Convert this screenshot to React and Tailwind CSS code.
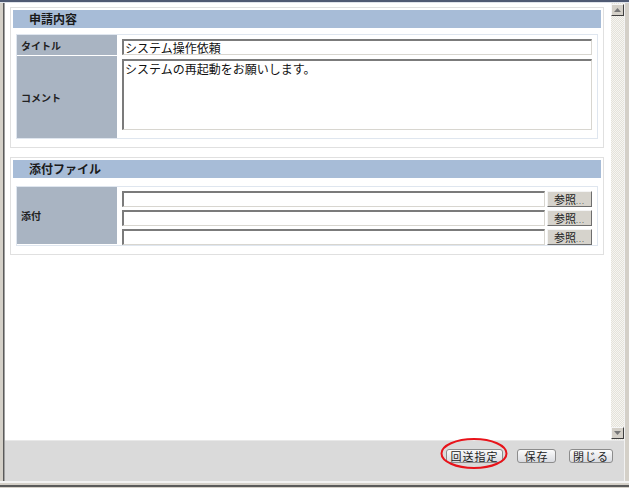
import React from 'react';

const font = { fontFamily: '"Noto Sans CJK JP", "Noto Sans", sans-serif' };

const inset =
  'border-t-2 border-l-2 border-b border-r border-t-[#7b7b7b] border-l-[#7b7b7b] border-b-[#d8d6d0] border-r-[#d8d6d0] bg-white';

function SectionHeader({ title }) {
  return (
    <div className="h-[18px] bg-[#a7bcd7] pl-[16px] flex items-center text-[12px] font-bold text-[#1a1a1a] leading-none">
      {title}
    </div>
  );
}

function Label({ children, className = '' }) {
  return (
    <div className={`w-[100px] bg-[#a9b4c2] flex items-center pl-[4px] text-[10px] font-bold text-[#222] ${className}`}>
      {children}
    </div>
  );
}

function BrowseButton() {
  return (
    <button className="w-[45px] h-[16px] bg-[#d6d3cc] border border-t-[#f4f4f4] border-l-[#f4f4f4] border-b-[#6e6e6e] border-r-[#6e6e6e] flex items-center justify-center text-[11px] leading-none text-[#222]">
      参照<span className="text-[7px] tracking-[1px] text-[#555] mt-[4px]">...</span>
    </button>
  );
}

function FooterButton({ children, w }) {
  return (
    <button
      className={`${w} h-[14px] rounded-[3px] border border-[#8c8c8c] bg-gradient-to-b from-[#fbfbfb] to-[#d9dbe0] text-[11px] leading-none text-[#222] flex items-center justify-center tracking-[1px]`}
    >
      {children}
    </button>
  );
}

export default function App() {
  return (
    <div className="w-[629px] h-[488px] flex flex-col bg-[#d4d0c8] overflow-hidden relative" style={font}>
      {/* top frame */}
      <div className="h-[3px] border-t-2 border-[#4f5a73] bg-[#dfe3ea]" />
      <div className="flex-1 flex min-h-0">
        {/* left frame */}
        <div className="w-[5px] flex">
          <div className="w-[3px] bg-[#d4d0c8]" />
          <div className="w-[1px] bg-[#5a5a5a]" />
          <div className="w-[1px] bg-[#a0a0a0]" />
        </div>
        <div className="flex-1 flex flex-col min-w-0">
          <div className="flex-1 flex min-h-0">
            {/* content */}
            <div className="flex-1 bg-white pl-[5px] pr-[7px] pt-[4px]">
              {/* section 1 */}
              <div className="border border-[#e0e0e0] p-[2px] pb-[8px]">
                <SectionHeader title="申請内容" />
                <div className="mt-[6px] mx-[3px] border border-[#dfe6ef] p-[0px]">
                  <div className="flex">
                    <Label className="h-[20px]">タイトル</Label>
                    <div className="flex-1 pl-[5px] pr-[5px] pt-[4px]">
                      <div className={`${inset} h-[16px] text-[12px] leading-[12px] pl-[1px] pt-[1px] text-[#111]`}>
                        システム操作依頼
                      </div>
                    </div>
                  </div>
                  <div className="flex mt-[1px]">
                    <Label className="h-[82px]">コメント</Label>
                    <div className="flex-1 pl-[5px] pr-[5px] pt-[3px]">
                      <div className={`${inset} h-[71px] text-[12px] leading-[13px] pl-[1px] pt-[1px] text-[#111]`}>
                        システムの再起動をお願いします。
                      </div>
                    </div>
                  </div>
                </div>
              </div>

              {/* section 2 */}
              <div className="mt-[9px] border border-[#e0e0e0] p-[2px] pb-[8px]">
                <SectionHeader title="添付ファイル" />
                <div className="mt-[8px] mx-[3px] border border-[#dfe6ef] flex">
                  <Label className="h-[57px]">添付</Label>
                  <div className="flex-1 pl-[5px] pr-[5px] pt-[4px] flex flex-col gap-[3px]">
                    {[0, 1, 2].map((i) => (
                      <div key={i} className="flex items-center gap-[2px]">
                        <div className={`${inset} flex-1 h-[16px]`} />
                        <BrowseButton />
                      </div>
                    ))}
                  </div>
                </div>
              </div>
            </div>
            {/* scrollbar */}
            <div className="w-[13px] flex flex-col bg-[repeating-conic-gradient(#e4e2da_0_25%,#f6f5f1_0_50%)] bg-[length:2px_2px]">
              <div className="h-[12px] mt-[1px] bg-[#d4d0c8] border border-t-[#f6f6f6] border-l-[#f6f6f6] border-b-[#404040] border-r-[#404040] flex items-center justify-center">
                <svg width="7" height="4" viewBox="0 0 7 4"><path d="M3.5 0 L7 4 L0 4 Z" fill="#777" /></svg>
              </div>
              <div className="flex-1" />
              <div className="h-[12px] mb-[1px] bg-[#d4d0c8] border border-t-[#f6f6f6] border-l-[#f6f6f6] border-b-[#404040] border-r-[#404040] flex items-center justify-center">
                <svg width="7" height="4" viewBox="0 0 7 4"><path d="M0 0 L7 0 L3.5 4 Z" fill="#777" /></svg>
              </div>
            </div>
          </div>
          {/* footer bar */}
          <div className="h-[41px] bg-[#dadada] border-t border-[#e8e8e8] flex items-start justify-end pt-[8px] pr-[11px]">
            <FooterButton w="w-[57px]">回送指定</FooterButton>
            <div className="w-[14px]" />
            <FooterButton w="w-[39px]">保存</FooterButton>
            <div className="w-[13px]" />
            <FooterButton w="w-[44px]">閉じる</FooterButton>
          </div>
        </div>
        {/* right frame */}
        <div className="w-[5px] flex">
          <div className="w-[1px] bg-[#f2f2f2]" />
          <div className="w-[4px] bg-[#d4d0c8]" />
        </div>
      </div>
      {/* bottom frame */}
      <div className="h-[7px] flex flex-col">
        <div className="h-[2px] bg-[#f2f2f2]" />
        <div className="h-[2px] bg-[#d4d0c8]" />
        <div className="h-[2px] bg-[#5a5a5a]" />
        <div className="h-[1px] bg-[#d4d0c8]" />
      </div>

      {/* red annotation ellipse */}
      <svg className="absolute left-[440px] top-[437px]" width="68" height="33" viewBox="0 0 68 33">
        <ellipse cx="34" cy="16.5" rx="32.5" ry="14.5" fill="none" stroke="#e8131a" strokeWidth="2" />
      </svg>
    </div>
  );
}
